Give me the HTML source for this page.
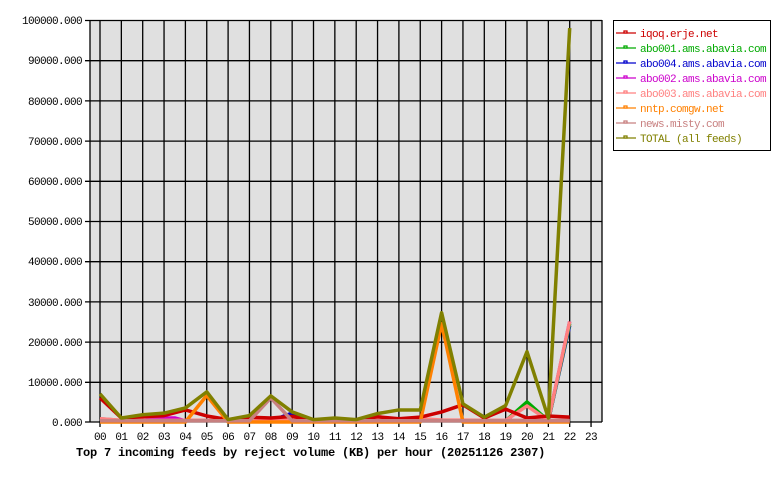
<!DOCTYPE html>
<html><head><meta charset="utf-8"><style>
html,body{margin:0;padding:0;background:#fff;width:780px;height:480px;overflow:hidden}
text{font-family:"Liberation Mono","DejaVu Sans Mono",monospace;font-size:11px;letter-spacing:-0.6px}
</style></head><body>
<svg width="780" height="480" xmlns="http://www.w3.org/2000/svg">
<rect x="90" y="20" width="512" height="402" fill="#e0e0e0"/>
<g stroke="#000" stroke-width="1.3">
<line x1="85" y1="20.5" x2="602" y2="20.5"/><line x1="85" y1="60.7" x2="602" y2="60.7"/><line x1="85" y1="100.9" x2="602" y2="100.9"/><line x1="85" y1="141.1" x2="602" y2="141.1"/><line x1="85" y1="181.3" x2="602" y2="181.3"/><line x1="85" y1="221.5" x2="602" y2="221.5"/><line x1="85" y1="261.7" x2="602" y2="261.7"/><line x1="85" y1="301.9" x2="602" y2="301.9"/><line x1="85" y1="342.1" x2="602" y2="342.1"/><line x1="85" y1="382.3" x2="602" y2="382.3"/><line x1="85" y1="422" x2="602" y2="422"/>
<line x1="90" y1="20" x2="90" y2="422"/><line x1="602" y1="20" x2="602" y2="422"/>
<line x1="100" y1="20" x2="100" y2="427"/><line x1="121.35" y1="20" x2="121.35" y2="427"/><line x1="142.7" y1="20" x2="142.7" y2="427"/><line x1="164.05" y1="20" x2="164.05" y2="427"/><line x1="185.4" y1="20" x2="185.4" y2="427"/><line x1="206.75" y1="20" x2="206.75" y2="427"/><line x1="228.1" y1="20" x2="228.1" y2="427"/><line x1="249.45" y1="20" x2="249.45" y2="427"/><line x1="270.8" y1="20" x2="270.8" y2="427"/><line x1="292.15" y1="20" x2="292.15" y2="427"/><line x1="313.5" y1="20" x2="313.5" y2="427"/><line x1="334.85" y1="20" x2="334.85" y2="427"/><line x1="356.2" y1="20" x2="356.2" y2="427"/><line x1="377.55" y1="20" x2="377.55" y2="427"/><line x1="398.9" y1="20" x2="398.9" y2="427"/><line x1="420.25" y1="20" x2="420.25" y2="427"/><line x1="441.6" y1="20" x2="441.6" y2="427"/><line x1="462.95" y1="20" x2="462.95" y2="427"/><line x1="484.3" y1="20" x2="484.3" y2="427"/><line x1="505.65" y1="20" x2="505.65" y2="427"/><line x1="527" y1="20" x2="527" y2="427"/><line x1="548.35" y1="20" x2="548.35" y2="427"/><line x1="569.7" y1="20" x2="569.7" y2="427"/><line x1="591.05" y1="20" x2="591.05" y2="427"/>
</g>
<g transform="translate(100,422) scale(21.35,-0.00402)" fill="none" stroke-width="3.5" stroke-linejoin="round">
<polyline vector-effect="non-scaling-stroke" stroke="#e07070" points="0,800 1,400 2,400 3,400 4,400 5,400 6,400 7,400 8,400 9,400 10,400 11,400 12,400 13,400 14,400 15,400 16,400 17,400 18,400 19,400 20,400 21,400 22,400"/>
<polyline vector-effect="non-scaling-stroke" stroke="#0000cc" points="0,300 8,300 9,2200 10,300 19,300 20,4500 21,300 22,24000"/>
<polyline vector-effect="non-scaling-stroke" stroke="#cc00cc" points="0,300 2,300 2.5,1000 3.5,1000 4,300 19,300 20,4500 21,300 22,25000"/>
<polyline vector-effect="non-scaling-stroke" stroke="#00aa00" points="0,300 19,300 20,5000 21,300 22,24500"/>
<polyline vector-effect="non-scaling-stroke" stroke="#ff8080" points="0,800 1,400 14,500 15,800 16,500 19,400 20,4000 21,400 22,25000"/>
<polyline vector-effect="non-scaling-stroke" stroke="#cc0000" points="0,6000 1,1000 2,1300 3,1600 4,3000 5,1500 6,600 7,1200 8,1000 9,1400 10,400 11,700 12,500 13,1300 14,800 15,1200 16,2500 17,4300 18,1000 19,3200 20,1000 21,1500 22,1200"/>
<polyline vector-effect="non-scaling-stroke" stroke="#ff8000" points="0,0 4,0 5,6600 6,0 15,0 16,24500 17,0 22,0"/>
<polyline vector-effect="non-scaling-stroke" stroke="#c88080" points="0,300 7,300 8,6000 9,300 22,300"/>
<polyline vector-effect="non-scaling-stroke" stroke="#808000" points="0,7000 1,1000 2,1800 3,2200 4,3500 5,7500 6,600 7,1600 8,6500 9,2500 10,600 11,1000 12,600 13,2100 14,3000 15,3000 16,27200 17,4500 18,1200 19,4100 20,17500 21,1000 22,98000"/>
</g>
<g text-anchor="end">
<text x="82" y="24">100000.000</text><text x="82" y="64">90000.000</text><text x="82" y="105">80000.000</text><text x="82" y="145">70000.000</text><text x="82" y="185">60000.000</text><text x="82" y="225">50000.000</text><text x="82" y="265">40000.000</text><text x="82" y="306">30000.000</text><text x="82" y="346">20000.000</text><text x="82" y="386">10000.000</text><text x="82" y="426">0.000</text>
</g>
<g text-anchor="middle">
<text x="100" y="440">00</text><text x="121.35" y="440">01</text><text x="142.7" y="440">02</text><text x="164.05" y="440">03</text><text x="185.4" y="440">04</text><text x="206.75" y="440">05</text><text x="228.1" y="440">06</text><text x="249.45" y="440">07</text><text x="270.8" y="440">08</text><text x="292.15" y="440">09</text><text x="313.5" y="440">10</text><text x="334.85" y="440">11</text><text x="356.2" y="440">12</text><text x="377.55" y="440">13</text><text x="398.9" y="440">14</text><text x="420.25" y="440">15</text><text x="441.6" y="440">16</text><text x="462.95" y="440">17</text><text x="484.3" y="440">18</text><text x="505.65" y="440">19</text><text x="527" y="440">20</text><text x="548.35" y="440">21</text><text x="569.7" y="440">22</text><text x="591.05" y="440">23</text>
</g>
<text x="76" y="456" font-weight="bold" style="font-size:12px;letter-spacing:-0.2px">Top 7 incoming feeds by reject volume (KB) per hour (20251126 2307)</text>
<rect x="613.5" y="20.5" width="157" height="130" fill="#fff" stroke="#000"/>
<g stroke-width="1.3">
<g stroke="#cc0000"><line x1="616" y1="33" x2="636" y2="33"/><rect x="624" y="31" width="3" height="2" fill="#fff"/></g>
<g stroke="#00aa00"><line x1="616" y1="48" x2="636" y2="48"/><rect x="624" y="46" width="3" height="2" fill="#fff"/></g>
<g stroke="#0000cc"><line x1="616" y1="63" x2="636" y2="63"/><rect x="624" y="61" width="3" height="2" fill="#fff"/></g>
<g stroke="#cc00cc"><line x1="616" y1="78" x2="636" y2="78"/><rect x="624" y="76" width="3" height="2" fill="#fff"/></g>
<g stroke="#ff8080"><line x1="616" y1="93" x2="636" y2="93"/><rect x="624" y="91" width="3" height="2" fill="#fff"/></g>
<g stroke="#ff8000"><line x1="616" y1="108" x2="636" y2="108"/><rect x="624" y="106" width="3" height="2" fill="#fff"/></g>
<g stroke="#c88080"><line x1="616" y1="123" x2="636" y2="123"/><rect x="624" y="121" width="3" height="2" fill="#fff"/></g>
<g stroke="#808000"><line x1="616" y1="138" x2="636" y2="138"/><rect x="624" y="136" width="3" height="2" fill="#fff"/></g>
</g>
<text x="640" y="37" fill="#cc0000">iqoq.erje.net</text>
<text x="640" y="52" fill="#00aa00">abo001.ams.abavia.com</text>
<text x="640" y="67" fill="#0000cc">abo004.ams.abavia.com</text>
<text x="640" y="82" fill="#cc00cc">abo002.ams.abavia.com</text>
<text x="640" y="97" fill="#ff8080">abo003.ams.abavia.com</text>
<text x="640" y="112" fill="#ff8000">nntp.comgw.net</text>
<text x="640" y="127" fill="#c88080">news.misty.com</text>
<text x="640" y="142" fill="#808000">TOTAL (all feeds)</text>
</svg>
</body></html>
